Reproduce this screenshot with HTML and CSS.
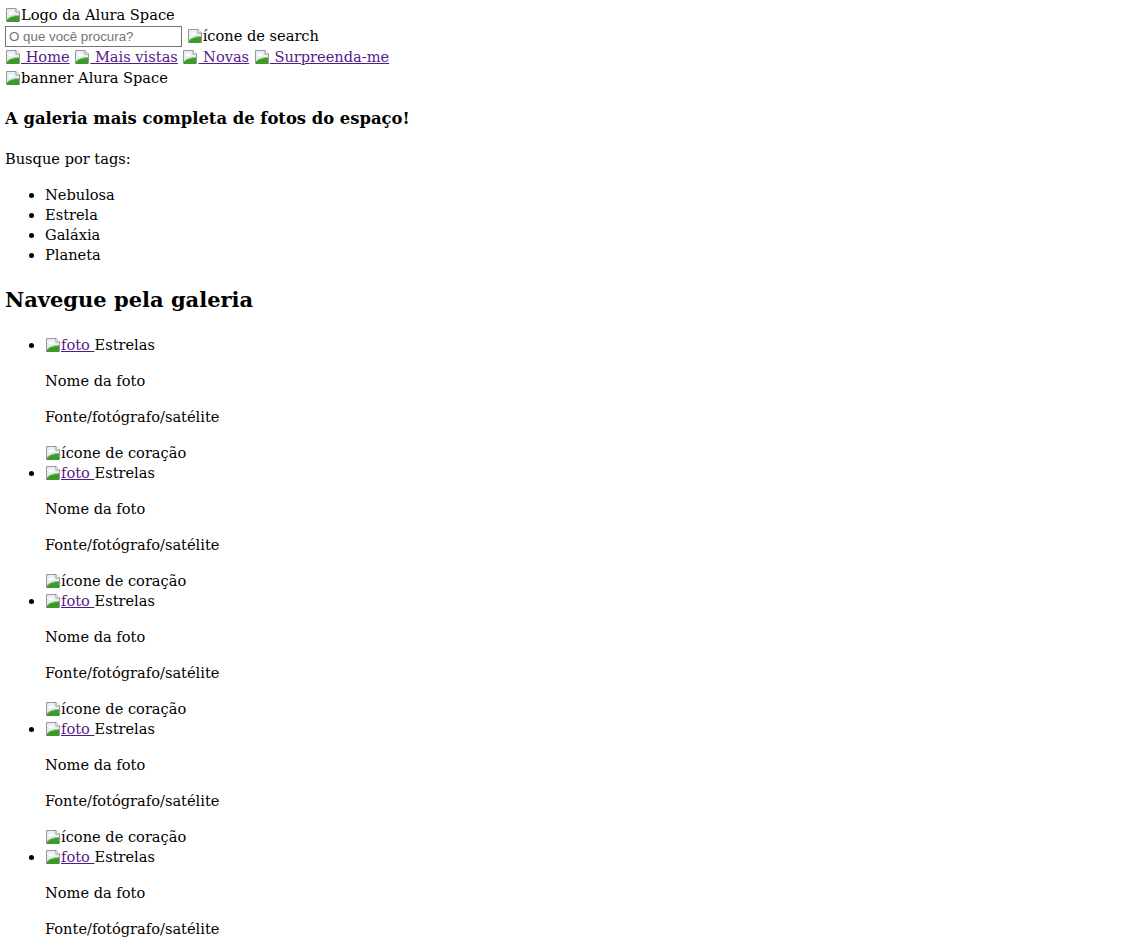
FILE: index.html
```html
<!DOCTYPE html>
<html lang="pt-br">
<head>
<meta charset="utf-8">
<title>Alura Space</title>
<link rel="stylesheet" href="styles.css">
</head>
<body>
<header class="cabecalho">
  <div class="row"><svg class="broken" viewBox="0 0 16 16"><path d="M1.5 1.5h9.5l3.5 3.5v9.5h-13z" fill="#e6eef7" stroke="#979797"/><path d="M11 1.5v3.5h3.5" fill="#fff" stroke="#979797"/><path d="M2 15 V12.5 C5 9.5 9 8.5 14 8.5 V15z" fill="#3e9a2c"/><path d="M2 12.5 C5 9.5 9 8.5 14 8.5" fill="none" stroke="#8cd06a"/><ellipse cx="6" cy="6" rx="2.5" ry="1.4" fill="#fff"/></svg>Logo da Alura Space</div>
  <div class="row"><input class="busca" type="text" placeholder="O que você procura?"> <svg class="broken" viewBox="0 0 16 16"><path d="M1.5 1.5h9.5l3.5 3.5v9.5h-13z" fill="#e6eef7" stroke="#979797"/><path d="M11 1.5v3.5h3.5" fill="#fff" stroke="#979797"/><path d="M2 15 V12.5 C5 9.5 9 8.5 14 8.5 V15z" fill="#3e9a2c"/><path d="M2 12.5 C5 9.5 9 8.5 14 8.5" fill="none" stroke="#8cd06a"/><ellipse cx="6" cy="6" rx="2.5" ry="1.4" fill="#fff"/></svg>ícone de search</div>
  <nav class="row">
    <a href="#" class="link"><svg class="broken" viewBox="0 0 16 16"><path d="M1.5 1.5h9.5l3.5 3.5v9.5h-13z" fill="#e6eef7" stroke="#979797"/><path d="M11 1.5v3.5h3.5" fill="#fff" stroke="#979797"/><path d="M2 15 V12.5 C5 9.5 9 8.5 14 8.5 V15z" fill="#3e9a2c"/><path d="M2 12.5 C5 9.5 9 8.5 14 8.5" fill="none" stroke="#8cd06a"/><ellipse cx="6" cy="6" rx="2.5" ry="1.4" fill="#fff"/></svg> Home</a>
    <a href="#" class="link"><svg class="broken" viewBox="0 0 16 16"><path d="M1.5 1.5h9.5l3.5 3.5v9.5h-13z" fill="#e6eef7" stroke="#979797"/><path d="M11 1.5v3.5h3.5" fill="#fff" stroke="#979797"/><path d="M2 15 V12.5 C5 9.5 9 8.5 14 8.5 V15z" fill="#3e9a2c"/><path d="M2 12.5 C5 9.5 9 8.5 14 8.5" fill="none" stroke="#8cd06a"/><ellipse cx="6" cy="6" rx="2.5" ry="1.4" fill="#fff"/></svg> Mais vistas</a>
    <a href="#" class="link"><svg class="broken" viewBox="0 0 16 16"><path d="M1.5 1.5h9.5l3.5 3.5v9.5h-13z" fill="#e6eef7" stroke="#979797"/><path d="M11 1.5v3.5h3.5" fill="#fff" stroke="#979797"/><path d="M2 15 V12.5 C5 9.5 9 8.5 14 8.5 V15z" fill="#3e9a2c"/><path d="M2 12.5 C5 9.5 9 8.5 14 8.5" fill="none" stroke="#8cd06a"/><ellipse cx="6" cy="6" rx="2.5" ry="1.4" fill="#fff"/></svg> Novas</a>
    <a href="#" class="link"><svg class="broken" viewBox="0 0 16 16"><path d="M1.5 1.5h9.5l3.5 3.5v9.5h-13z" fill="#e6eef7" stroke="#979797"/><path d="M11 1.5v3.5h3.5" fill="#fff" stroke="#979797"/><path d="M2 15 V12.5 C5 9.5 9 8.5 14 8.5 V15z" fill="#3e9a2c"/><path d="M2 12.5 C5 9.5 9 8.5 14 8.5" fill="none" stroke="#8cd06a"/><ellipse cx="6" cy="6" rx="2.5" ry="1.4" fill="#fff"/></svg> Surpreenda-me</a>
  </nav>
  <div class="row"><svg class="broken" viewBox="0 0 16 16"><path d="M1.5 1.5h9.5l3.5 3.5v9.5h-13z" fill="#e6eef7" stroke="#979797"/><path d="M11 1.5v3.5h3.5" fill="#fff" stroke="#979797"/><path d="M2 15 V12.5 C5 9.5 9 8.5 14 8.5 V15z" fill="#3e9a2c"/><path d="M2 12.5 C5 9.5 9 8.5 14 8.5" fill="none" stroke="#8cd06a"/><ellipse cx="6" cy="6" rx="2.5" ry="1.4" fill="#fff"/></svg>banner Alura Space</div>
</header>
<main>
  <h3 class="titulo">A galeria mais completa de fotos do espaço!</h3>
  <p class="texto">Busque por tags:</p>
  <ul class="lista tags">
    <li>Nebulosa</li>
    <li>Estrela</li>
    <li>Galáxia</li>
    <li>Planeta</li>
  </ul>
  <h2 class="subtitulo">Navegue pela galeria</h2>
  <ul class="lista galeria">
    <li>
      <div class="linha"><a href="#" class="link"><svg class="broken" viewBox="0 0 16 16"><path d="M1.5 1.5h9.5l3.5 3.5v9.5h-13z" fill="#e6eef7" stroke="#979797"/><path d="M11 1.5v3.5h3.5" fill="#fff" stroke="#979797"/><path d="M2 15 V12.5 C5 9.5 9 8.5 14 8.5 V15z" fill="#3e9a2c"/><path d="M2 12.5 C5 9.5 9 8.5 14 8.5" fill="none" stroke="#8cd06a"/><ellipse cx="6" cy="6" rx="2.5" ry="1.4" fill="#fff"/></svg>foto </a>Estrelas</div>
      <p class="texto">Nome da foto</p>
      <p class="texto">Fonte/fotógrafo/satélite</p>
      <div class="linha"><svg class="broken" viewBox="0 0 16 16"><path d="M1.5 1.5h9.5l3.5 3.5v9.5h-13z" fill="#e6eef7" stroke="#979797"/><path d="M11 1.5v3.5h3.5" fill="#fff" stroke="#979797"/><path d="M2 15 V12.5 C5 9.5 9 8.5 14 8.5 V15z" fill="#3e9a2c"/><path d="M2 12.5 C5 9.5 9 8.5 14 8.5" fill="none" stroke="#8cd06a"/><ellipse cx="6" cy="6" rx="2.5" ry="1.4" fill="#fff"/></svg>ícone de coração</div>
    </li>
    <li>
      <div class="linha"><a href="#" class="link"><svg class="broken" viewBox="0 0 16 16"><path d="M1.5 1.5h9.5l3.5 3.5v9.5h-13z" fill="#e6eef7" stroke="#979797"/><path d="M11 1.5v3.5h3.5" fill="#fff" stroke="#979797"/><path d="M2 15 V12.5 C5 9.5 9 8.5 14 8.5 V15z" fill="#3e9a2c"/><path d="M2 12.5 C5 9.5 9 8.5 14 8.5" fill="none" stroke="#8cd06a"/><ellipse cx="6" cy="6" rx="2.5" ry="1.4" fill="#fff"/></svg>foto </a>Estrelas</div>
      <p class="texto">Nome da foto</p>
      <p class="texto">Fonte/fotógrafo/satélite</p>
      <div class="linha"><svg class="broken" viewBox="0 0 16 16"><path d="M1.5 1.5h9.5l3.5 3.5v9.5h-13z" fill="#e6eef7" stroke="#979797"/><path d="M11 1.5v3.5h3.5" fill="#fff" stroke="#979797"/><path d="M2 15 V12.5 C5 9.5 9 8.5 14 8.5 V15z" fill="#3e9a2c"/><path d="M2 12.5 C5 9.5 9 8.5 14 8.5" fill="none" stroke="#8cd06a"/><ellipse cx="6" cy="6" rx="2.5" ry="1.4" fill="#fff"/></svg>ícone de coração</div>
    </li>
    <li>
      <div class="linha"><a href="#" class="link"><svg class="broken" viewBox="0 0 16 16"><path d="M1.5 1.5h9.5l3.5 3.5v9.5h-13z" fill="#e6eef7" stroke="#979797"/><path d="M11 1.5v3.5h3.5" fill="#fff" stroke="#979797"/><path d="M2 15 V12.5 C5 9.5 9 8.5 14 8.5 V15z" fill="#3e9a2c"/><path d="M2 12.5 C5 9.5 9 8.5 14 8.5" fill="none" stroke="#8cd06a"/><ellipse cx="6" cy="6" rx="2.5" ry="1.4" fill="#fff"/></svg>foto </a>Estrelas</div>
      <p class="texto">Nome da foto</p>
      <p class="texto">Fonte/fotógrafo/satélite</p>
      <div class="linha"><svg class="broken" viewBox="0 0 16 16"><path d="M1.5 1.5h9.5l3.5 3.5v9.5h-13z" fill="#e6eef7" stroke="#979797"/><path d="M11 1.5v3.5h3.5" fill="#fff" stroke="#979797"/><path d="M2 15 V12.5 C5 9.5 9 8.5 14 8.5 V15z" fill="#3e9a2c"/><path d="M2 12.5 C5 9.5 9 8.5 14 8.5" fill="none" stroke="#8cd06a"/><ellipse cx="6" cy="6" rx="2.5" ry="1.4" fill="#fff"/></svg>ícone de coração</div>
    </li>
    <li>
      <div class="linha"><a href="#" class="link"><svg class="broken" viewBox="0 0 16 16"><path d="M1.5 1.5h9.5l3.5 3.5v9.5h-13z" fill="#e6eef7" stroke="#979797"/><path d="M11 1.5v3.5h3.5" fill="#fff" stroke="#979797"/><path d="M2 15 V12.5 C5 9.5 9 8.5 14 8.5 V15z" fill="#3e9a2c"/><path d="M2 12.5 C5 9.5 9 8.5 14 8.5" fill="none" stroke="#8cd06a"/><ellipse cx="6" cy="6" rx="2.5" ry="1.4" fill="#fff"/></svg>foto </a>Estrelas</div>
      <p class="texto">Nome da foto</p>
      <p class="texto">Fonte/fotógrafo/satélite</p>
      <div class="linha"><svg class="broken" viewBox="0 0 16 16"><path d="M1.5 1.5h9.5l3.5 3.5v9.5h-13z" fill="#e6eef7" stroke="#979797"/><path d="M11 1.5v3.5h3.5" fill="#fff" stroke="#979797"/><path d="M2 15 V12.5 C5 9.5 9 8.5 14 8.5 V15z" fill="#3e9a2c"/><path d="M2 12.5 C5 9.5 9 8.5 14 8.5" fill="none" stroke="#8cd06a"/><ellipse cx="6" cy="6" rx="2.5" ry="1.4" fill="#fff"/></svg>ícone de coração</div>
    </li>
    <li>
      <div class="linha"><a href="#" class="link"><svg class="broken" viewBox="0 0 16 16"><path d="M1.5 1.5h9.5l3.5 3.5v9.5h-13z" fill="#e6eef7" stroke="#979797"/><path d="M11 1.5v3.5h3.5" fill="#fff" stroke="#979797"/><path d="M2 15 V12.5 C5 9.5 9 8.5 14 8.5 V15z" fill="#3e9a2c"/><path d="M2 12.5 C5 9.5 9 8.5 14 8.5" fill="none" stroke="#8cd06a"/><ellipse cx="6" cy="6" rx="2.5" ry="1.4" fill="#fff"/></svg>foto </a>Estrelas</div>
      <p class="texto">Nome da foto</p>
      <p class="texto">Fonte/fotógrafo/satélite</p>
      <div class="linha"><svg class="broken" viewBox="0 0 16 16"><path d="M1.5 1.5h9.5l3.5 3.5v9.5h-13z" fill="#e6eef7" stroke="#979797"/><path d="M11 1.5v3.5h3.5" fill="#fff" stroke="#979797"/><path d="M2 15 V12.5 C5 9.5 9 8.5 14 8.5 V15z" fill="#3e9a2c"/><path d="M2 12.5 C5 9.5 9 8.5 14 8.5" fill="none" stroke="#8cd06a"/><ellipse cx="6" cy="6" rx="2.5" ry="1.4" fill="#fff"/></svg>ícone de coração</div>
    </li>
  </ul>
</main>
</body>
</html>
```
FILE: styles.css
```css
body {
  margin: 5px;
  font-family: "DejaVu Serif", serif;
  font-size: 14.6px;
  line-height: 20px;
  color: #000;
  background: #fff;
}
.row {
  height: 21px;
  line-height: 20px;
  white-space: nowrap;
}
.linha {
  height: 20px;
  line-height: 20px;
  white-space: nowrap;
}
.broken {
  width: 16px;
  height: 16px;
  vertical-align: -3px;
}
.link {
  color: #551a8b;
  text-decoration: underline;
}
.busca {
  box-sizing: border-box;
  width: 177px;
  height: 21px;
  margin: 0;
  padding: 1px 3px;
  border: 1px solid #767676;
  font-family: "Liberation Sans", Arial, sans-serif;
  font-size: 13.33px;
  vertical-align: top;
}
.busca::placeholder {
  color: #757575;
}
.titulo {
  font-size: 16.4px;
  line-height: 23px;
  margin: 17.7px 0 19.72px;
}
.subtitulo {
  font-size: 21px;
  line-height: 27px;
  margin: 20.92px 0 21.9px;
}
.texto {
  margin: 16px 0;
}
.lista {
  margin: 16px 0;
  padding-left: 40px;
}
```
